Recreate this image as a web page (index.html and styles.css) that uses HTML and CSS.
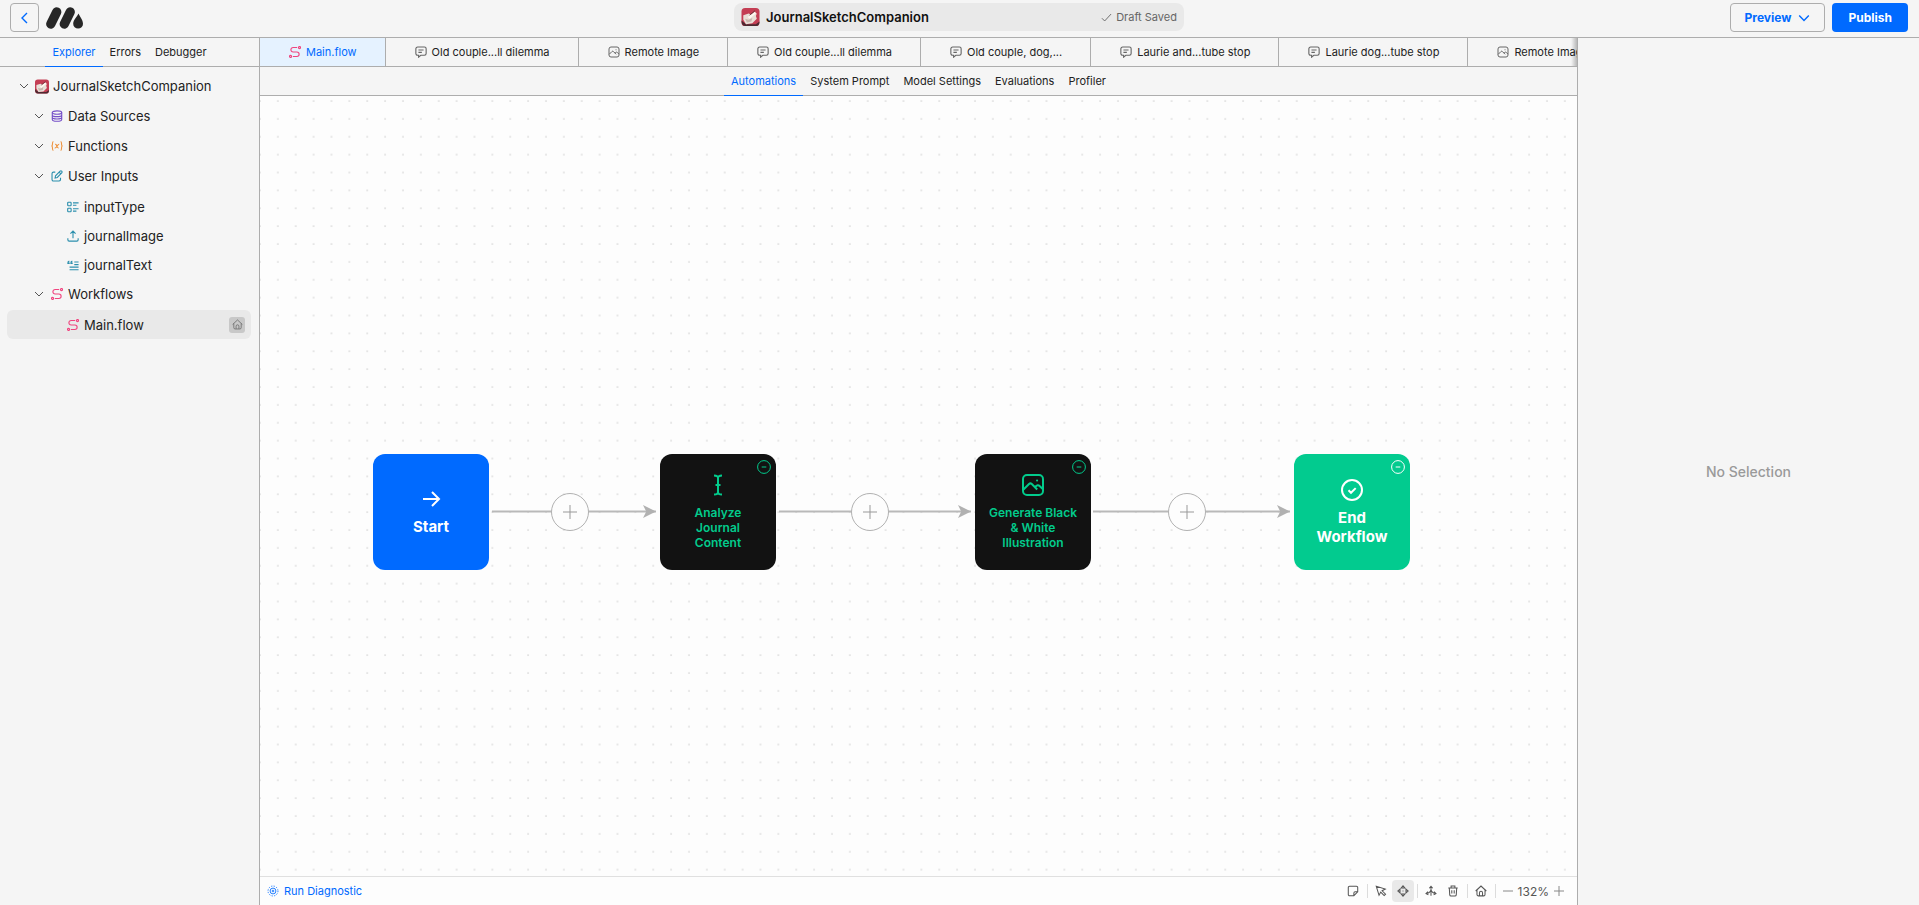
FILE: index.html
```html
<!DOCTYPE html>
<html lang="en">
<head>
<meta charset="utf-8">
<title>JournalSketchCompanion</title>
<link rel="stylesheet" href="styles.css">
</head>
<body>
<svg class="sprite" aria-hidden="true">
  <symbol id="chevron" viewBox="0 0 10 10"><path d="M1 3 5 7l4-4"/></symbol>
  <symbol id="flow" viewBox="0 0 14 14"><circle cx="1.800" cy="12.200" r="1.200"/><circle cx="12.200" cy="1.800" r="1.200"/><path d="M9.500 1.800H4.800a2.600 2.600 0 0 0 0 5.200h4.400a2.600 2.600 0 0 1 0 5.200H4.500"/></symbol>
  <symbol id="chat" viewBox="0 0 14 14"><path d="M3 1.200h8a2 2 0 0 1 2 2v5.600a2 2 0 0 1-2 2H6.800L4.200 13v-2.200H3a2 2 0 0 1-2-2V3.200a2 2 0 0 1 2-2ZM4 4.700h6M4 7.500h4"/></symbol>
  <symbol id="image" viewBox="0 0 24 24"><rect x="2" y="2" width="20" height="20" rx="4"/><path d="M2.500 16.500 8 11c1-.9 1.800-.9 2.800 0l5.400 5.500M14 14.200c2-2.400 3.400-2.400 4.600-1.200L22 16.200"/><path d="M16 7.500h.1" stroke-linecap="round"/></symbol>
  <symbol id="home" viewBox="0 0 14 14"><path d="M.8 7 7 1.200 13.200 7M2.300 5.800V11a1.700 1.700 0 0 0 1.700 1.700h6a1.700 1.700 0 0 0 1.700-1.700V5.800M5.200 12.500V9.200a1.800 1.800 0 0 1 3.600 0v3.300"/></symbol>
  <symbol id="minus-circle" viewBox="0 0 14 14"><circle cx="7" cy="7" r="6.400"/><path d="M4.700 7h4.600"/></symbol>
  <symbol id="plus" viewBox="0 0 14 14"><path d="M7 0v14M0 7h14"/></symbol>
  <symbol id="thumb" viewBox="0 0 20 20">
    <rect width="20" height="20" rx="4" fill="#c43e54"/>
    <path d="M0 14c0 3 1 6 4 6h12c3 0 4-2 4-5l-4 3H5Z" fill="#4b2a31"/>
    <path d="m2 8 6-2 4 2 3-3 2 1-1 3 1 3-5 5-7 1-3-5Z" fill="#e9e0d8"/>
    <path d="m7 10 8-6 1 2-7 6Z" fill="#fff8f0"/><path d="m4 12 4 1 4-2-1 4-5 1Z" fill="#c9b7ae"/>
    <path d="m9 8 6-5" stroke="#5c333a" stroke-width="1"/>
  </symbol>
</svg>

<div class="app">
  <header class="topbar">
    <div class="topbar-side">
      <button class="back" type="button" aria-label="Back"><svg viewBox="0 0 14 14"><path d="M9 2 4 7l5 5"/></svg></button>
      <svg class="logo" viewBox="0 0 37 22" aria-label="Logo"><path d="M4.800 17 10.700 5M18.300 17 24.200 5" stroke="#272727" stroke-width="9.400" stroke-linecap="round"/><path d="M32.500 6.500C34 9.500 37 13.300 37 16.700a4.900 4.900 0 0 1-9.800 0c0-3.400 3.800-7.200 5.300-10.200Z" fill="#272727"/></svg>
    </div>
    <div class="project">
      <svg class="project-thumb"><use href="#thumb"/></svg>
      <h1>JournalSketchCompanion</h1>
      <span class="saved"><svg viewBox="0 0 12 12"><path d="m1 6.800 3 3 7-7.600"/></svg>Draft Saved</span>
    </div>
    <div class="topbar-side topbar-actions">
      <button class="btn btn-outline" type="button">Preview <svg><use href="#chevron"/></svg></button>
      <button class="btn btn-primary" type="button">Publish</button>
    </div>
  </header>

  <div class="workspace">
    <aside class="sidebar">
      <nav class="tabs">
        <button class="tab is-active" type="button">Explorer</button>
        <button class="tab" type="button">Errors</button>
        <button class="tab" type="button">Debugger</button>
      </nav>
      <div class="tree">
        <div class="row row-root"><svg class="chev"><use href="#chevron"/></svg><svg class="root-thumb"><use href="#thumb"/></svg>JournalSketchCompanion</div>
        <div class="row row-folder"><svg class="chev"><use href="#chevron"/></svg><svg class="icon purple" viewBox="0 0 14 14"><ellipse cx="7" cy="3" rx="5.500" ry="2"/><path d="M1.500 3v8c0 1.200 2.400 2.200 5.500 2.200s5.500-1 5.500-2.200V3M1.500 5.700c0 1.200 2.400 2 5.500 2s5.500-.8 5.500-2M1.500 8.500c0 1.200 2.400 2 5.500 2s5.500-.8 5.500-2"/></svg>Data Sources</div>
        <div class="row row-folder"><svg class="chev"><use href="#chevron"/></svg><svg class="icon orange" viewBox="0 0 14 14"><path d="M2.800 1.800C1.500 2 1.800 3.300 1.700 5c0 1.300-.3 2-1.200 2 .9 0 1.200.8 1.200 2 .1 1.800-.2 3.200 1.100 3.300M11.200 1.800c1.300.2 1 1.500 1.100 3.200 0 1.300.3 2 1.200 2-.9 0-1.200.8-1.200 2-.1 1.800.2 3.200-1.100 3.300M4.700 5c2.600-.8 1.300 4.800 4.300 4.300M9.600 4.900c-2.300-.3-2.600 4.900-5.300 4.400"/></svg>Functions</div>
        <div class="row row-folder"><svg class="chev"><use href="#chevron"/></svg><svg class="icon teal" viewBox="0 0 14 14"><path d="M5 2.500H2.800A1.600 1.600 0 0 0 1.200 4v7.200a1.600 1.600 0 0 0 1.600 1.600H9.500a1.600 1.600 0 0 0 1.600-1.600V9M4.800 9.300l.5-2.600 5.300-5.300a1.300 1.300 0 0 1 1.900 1.900L7.300 8.700ZM9.500 2.500l2 2"/></svg>User Inputs</div>
        <div class="leaves">
          <div class="row row-leaf"><svg class="icon teal" viewBox="0 0 14 14"><rect x=".8" y="1.500" width="4" height="4" rx=".8"/><rect x=".8" y="8.500" width="4" height="4" rx=".8"/><path d="M7 2.200h6.500M7 5h4M7 9h6.500M7 11.800h4"/></svg>inputType</div>
          <div class="row row-leaf"><svg class="icon teal" viewBox="0 0 14 14"><path d="M7 9.500V1.500M4 4.300l3-3 3 3M1 9.500v2a1.500 1.500 0 0 0 1.500 1.500h9a1.500 1.500 0 0 0 1.500-1.500v-2"/></svg>journalImage</div>
          <div class="row row-leaf"><svg class="icon teal" viewBox="0 0 14 14"><path d="M2.700 2.500C1 3 .8 4 1 5.300h1.500V4M6.200 2.500C4.500 3 4.300 4 4.500 5.300H6V4M8.500 3.500h5M8.500 6.500h5M3 9.500h10.500M3 12.500h10.500"/></svg>journalText</div>
        </div>
        <div class="row row-folder"><svg class="chev"><use href="#chevron"/></svg><svg class="icon pink"><use href="#flow"/></svg>Workflows</div>
        <div class="leaves">
          <div class="row row-leaf is-selected"><svg class="icon pink"><use href="#flow"/></svg>Main.flow<span class="badge"><svg><use href="#home"/></svg></span></div>
        </div>
      </div>
    </aside>

    <main class="editor">
      <nav class="files">
        <button class="file is-active" type="button"><svg class="icon pink"><use href="#flow"/></svg>Main.flow</button>
        <button class="file" type="button"><svg class="icon"><use href="#chat"/></svg>Old couple...ll dilemma</button>
        <button class="file" type="button"><svg class="icon icon-image"><use href="#image"/></svg>Remote Image</button>
        <button class="file" type="button"><svg class="icon"><use href="#chat"/></svg>Old couple...ll dilemma</button>
        <button class="file" type="button"><svg class="icon"><use href="#chat"/></svg>Old couple, dog,...</button>
        <button class="file" type="button"><svg class="icon"><use href="#chat"/></svg>Laurie and...tube stop</button>
        <button class="file" type="button"><svg class="icon"><use href="#chat"/></svg>Laurie dog...tube stop</button>
        <button class="file" type="button"><svg class="icon icon-image"><use href="#image"/></svg>Remote Image</button>
      </nav>
      <nav class="tabs">
        <button class="tab is-active" type="button">Automations</button>
        <button class="tab" type="button">System Prompt</button>
        <button class="tab" type="button">Model Settings</button>
        <button class="tab" type="button">Evaluations</button>
        <button class="tab" type="button">Profiler</button>
      </nav>

      <section class="canvas">
        <svg class="canvas-bg">
          <defs>
            <pattern id="dots" width="13" height="13" patternUnits="userSpaceOnUse" patternTransform="translate(-9 -4) scale(1.375)"><rect x="5.900" y="5.900" width="1.300" height="1.300" rx=".3" fill="#e0e0e0"/></pattern>
            <marker id="arrow" viewBox="0 0 12 12" markerUnits="userSpaceOnUse" markerWidth="13" markerHeight="13" refX="12" refY="6"><path d="M0 0 12 6 0 12 3 6Z" fill="#b1b1b1"/></marker>
          </defs>
          <rect width="100%" height="100%" fill="url(#dots)"/>
          <g stroke="#b9b9b9" stroke-width="2">
            <path d="M232 415.500H396" marker-end="url(#arrow)"/>
            <path d="M519 415.500H711" marker-end="url(#arrow)"/>
            <path d="M833 415.500H1030" marker-end="url(#arrow)"/>
          </g>
        </svg>
        <article class="node node-start">
          <svg class="node-icon" viewBox="0 0 24 24"><path d="M4 12h15.500M13 5l7 7-7 7"/></svg>Start
        </article>
        <button class="add add-1" type="button" aria-label="Add step"><svg><use href="#plus"/></svg></button>
        <article class="node node-block node-analyze">
          <svg class="node-icon" viewBox="0 0 24 24"><path d="M8 2.500c2 0 4 .7 4 2.500v14c0 1.800-2 2.500-4 2.500M16 2.500c-2 0-4 .7-4 2.500v14c0 1.800 2 2.500 4 2.500M9.500 12h5"/></svg>Analyze Journal Content
          <button class="collapse" type="button" aria-label="Collapse"><svg><use href="#minus-circle"/></svg></button>
        </article>
        <button class="add add-2" type="button" aria-label="Add step"><svg><use href="#plus"/></svg></button>
        <article class="node node-block node-generate">
          <svg class="node-icon"><use href="#image"/></svg>Generate Black &amp; White Illustration
          <button class="collapse" type="button" aria-label="Collapse"><svg><use href="#minus-circle"/></svg></button>
        </article>
        <button class="add add-3" type="button" aria-label="Add step"><svg><use href="#plus"/></svg></button>
        <article class="node node-end">
          <svg class="node-icon" viewBox="0 0 24 24"><circle cx="12" cy="12" r="10"/><path d="m8.500 12.300 2.500 2.500 4.700-4.700"/></svg>End Workflow
          <button class="collapse" type="button" aria-label="Collapse"><svg><use href="#minus-circle"/></svg></button>
        </article>
      </section>

      <footer class="statusbar">
        <button class="diagnostic" type="button"><svg viewBox="0 0 14 14"><circle cx="7" cy="7" r="3.400"/><circle cx="7" cy="7" r="1"/><circle cx="7" cy="7" r="5.800" stroke-dasharray="1.500 1.540"/></svg>Run Diagnostic</button>
        <div class="tools">
          <button class="tool" type="button" aria-label="Note"><svg viewBox="0 0 14 14"><path d="M3 1.500h8A1.500 1.500 0 0 1 12.500 3v5L8 12.500H3A1.500 1.500 0 0 1 1.500 11V3A1.500 1.500 0 0 1 3 1.500ZM12.500 8H9.500A1.500 1.500 0 0 0 8 9.500v3"/></svg></button>
          <i class="sep"></i>
          <button class="tool" type="button" aria-label="Select"><svg viewBox="0 0 14 14"><path d="m1.500 1.500 3.200 10.500 2-3.700 4 4 1.600-1.600-4-4 3.700-2Z"/></svg></button>
          <button class="tool is-active" type="button" aria-label="Pan"><svg viewBox="0 0 14 14"><path d="m4.800 3.500 2.200-2.500 2.200 2.500ZM4.800 10.500 7 13l2.200-2.500ZM3.500 4.800 1 7l2.500 2.200ZM10.500 4.800 13 7l-2.500 2.200ZM6.500 7h1"/></svg></button>
          <i class="sep"></i>
          <button class="tool" type="button" aria-label="Arrange"><svg viewBox="0 0 14 14"><path d="M7 12.500V2M5 3.800 7 1.500l2 2.300M7 5.500C6.500 8 4.500 9.500 2 10M3.500 7.800 1.200 10l2.800 1.500M7 5.500C7.500 8 9.500 9.500 12 10M10.500 7.800l2.300 2.200-2.800 1.500"/></svg></button>
          <button class="tool" type="button" aria-label="Delete"><svg viewBox="0 0 14 14"><path d="M1.500 3.500h11M4.800 3.300V1.200h4.400v2.100M2.700 3.700l.5 7.800a1.500 1.500 0 0 0 1.500 1.300h4.600a1.500 1.500 0 0 0 1.500-1.300l.5-7.800M5.600 6v4M8.400 6v4"/></svg></button>
          <i class="sep"></i>
          <button class="tool" type="button" aria-label="Home"><svg><use href="#home"/></svg></button>
          <i class="sep"></i>
          <button class="zoom-btn" type="button" aria-label="Zoom out"><svg viewBox="0 0 10 10"><path d="M0 5h10"/></svg></button>
          <span class="zoom-value">132%</span>
          <button class="zoom-btn" type="button" aria-label="Zoom in"><svg viewBox="0 0 10 10"><path d="M0 5h10M5 0v10"/></svg></button>
        </div>
      </footer>
    </main>

    <aside class="inspector">No Selection</aside>
  </div>
</div>
</body>
</html>
```
FILE: styles.css
```css
* { box-sizing: border-box; }

body {
  margin: 0;
  font-family: Inter, "Liberation Sans", sans-serif;
  font-size: 11px;
  color: #222;
  background: #f5f5f5;
}

button {
  margin: 0;
  padding: 0;
  border: 0;
  background: none;
  color: inherit;
  font: inherit;
  cursor: pointer;
}

svg {
  display: block;
  flex: none;
  fill: none;
  stroke: currentColor;
  overflow: visible;
}

.sprite { position: absolute; width: 0; height: 0; }
#thumb { stroke: none; }

.app {
  display: flex;
  flex-direction: column;
  height: 100vh;
}

/* Top bar */
.topbar {
  display: flex;
  align-items: flex-start;
  height: 38px;
  padding: 3px 11px 0 10px;
  border-bottom: 1px solid #adadad;
}
.topbar-side { display: flex; flex: 1; align-items: center; gap: 7px; }
.topbar-actions { justify-content: flex-end; }
.back {
  display: flex;
  align-items: center;
  justify-content: center;
  width: 29px;
  height: 29px;
  border: 1px solid #adadad;
  border-radius: 4px;
  color: #006aff;
}
.back svg { width: 14px; height: 14px; stroke-width: 1.4; }
.logo { width: 37px; height: 22px; stroke: none; }
.project {
  display: flex;
  align-items: center;
  width: 450px;
  height: 28px;
  padding: 0 7px;
  border-radius: 8px;
  background: #e9e9e9;
}
.project-thumb { width: 19px; height: 18px; }
.project h1 { flex: 1; margin: 0 0 0 6px; font-size: 13px; font-weight: 600; color: #111; }
.saved { display: flex; align-items: center; gap: 4px; color: #666; }
.saved svg { width: 11px; height: 11px; }
.btn {
  display: flex;
  align-items: center;
  justify-content: center;
  gap: 7px;
  height: 29px;
  border-radius: 4px;
  font-size: 12px;
  font-weight: 700;
}
.btn svg { width: 12px; height: 12px; stroke-width: 1.2; }
.btn-outline { padding: 0 14px; border: 1px solid #adadad; color: #006aff; }
.btn-primary { padding: 0 16px; background: #006aff; color: #fff; }

/* Layout */
.workspace { display: flex; flex: 1; min-height: 0; }
.sidebar { width: 260px; border-right: 1px solid #adadad; }
.editor { display: flex; flex: 1; flex-direction: column; min-width: 0; }
.inspector {
  display: flex;
  align-items: center;
  justify-content: center;
  width: 342px;
  border-left: 1px solid #adadad;
  font-size: 14px;
  font-weight: 500;
  color: #9a9a9a;
}

/* Text tabs */
.tabs {
  display: flex;
  flex: none;
  justify-content: center;
  height: 29px;
  border-bottom: 1px solid #adadad;
}
.tab { height: 29px; padding: 0 7px; border-bottom: 1px solid transparent; }
.tab.is-active { border-color: #006aff; color: #006aff; }

/* Project tree */
.tree { padding: 4px 8px 0 7px; font-size: 13px; }
.row { display: flex; align-items: center; height: 30px; }
.row-root { padding-left: 12px; }
.row-folder { padding-left: 27px; }
.row-leaf { height: 29px; padding: 0 6px 0 60px; border-radius: 6px; }
.row-leaf.is-selected { background: #e9e9e9; }
.leaves { padding-top: 1px; }
.chev { width: 10px; height: 10px; margin-right: 6px; color: #555; }
.row-folder .chev { margin-right: 7px; }
.icon { width: 12px; height: 12px; margin-right: 5px; stroke-width: 1.3; }
.root-thumb { width: 14px; height: 15px; margin-right: 4px; }
.purple { color: #7650c8; }
.orange { color: #ee9440; }
.teal { color: #2b8fad; }
.pink { color: #f0447f; }
.badge {
  display: flex;
  align-items: center;
  justify-content: center;
  width: 16px;
  height: 16px;
  margin-left: auto;
  border-radius: 3px;
  background: #c8c8c8;
  color: #666;
}
.badge svg { width: 11px; height: 11px; }

/* Open files */
.files {
  position: relative;
  display: flex;
  flex: none;
  height: 29px;
  border-bottom: 1px solid #adadad;
  overflow: hidden;
}
.files::after {
  content: "";
  position: absolute;
  top: 0;
  right: 0;
  width: 6px;
  height: 100%;
  background: linear-gradient(to right, transparent, rgba(0, 0, 0, 0.25));
}
.file {
  display: flex;
  flex: none;
  align-items: center;
  padding: 0 28px 0 29px;
  border-right: 1px solid #adadad;
}
.file .icon:not(.pink) { color: #666; }
.file.is-active { background: #e5f2ff; color: #006aff; }
.icon-image { stroke-width: 2; }

/* Canvas */
.canvas { position: relative; flex: 1; min-height: 0; overflow: hidden; background: #fdfdfd; }
.canvas-bg { position: absolute; inset: 0; width: 100%; height: 100%; stroke: none; }
.node {
  position: absolute;
  top: 358px;
  display: flex;
  flex-direction: column;
  align-items: center;
  justify-content: center;
  gap: 6px;
  width: 116px;
  height: 116px;
  padding: 0 12px 1px;
  border-radius: 12px;
  font-size: 15px;
  line-height: 19px;
  font-weight: 700;
  text-align: center;
  color: #fff;
}
.node-icon { width: 24px; height: 24px; stroke-width: 2; }
.node-start { left: 113px; background: #006aff; }
.node-block { gap: 8px; background: #121212; color: #02cb8c; font-size: 12px; line-height: 15px; font-weight: 600; }
.node-analyze { left: 400px; padding: 0 30px 1px; }
.node-generate { left: 715px; }
.node-end { left: 1034px; background: #02cb8f; }
.collapse { position: absolute; top: 6px; right: 5px; }
.collapse svg { width: 14px; height: 14px; }
.add {
  position: absolute;
  top: 397px;
  display: flex;
  align-items: center;
  justify-content: center;
  width: 38px;
  height: 38px;
  border: 1px solid #b1b1b1;
  border-radius: 50%;
  background: #fdfdfd;
  color: #999;
}
.add svg { width: 14px; height: 14px; }
.add-1 { left: 291px; }
.add-2 { left: 591px; }
.add-3 { left: 908px; }

/* Status bar */
.statusbar {
  display: flex;
  flex: none;
  align-items: center;
  justify-content: space-between;
  height: 29px;
  padding: 0 13px 0 7px;
  border-top: 1px solid #e0e0e0;
  background: #fdfdfd;
}
.diagnostic { display: flex; align-items: center; gap: 5px; color: #006aff; }
.diagnostic svg { width: 12px; height: 12px; }
.tools { display: flex; align-items: center; color: #555; }
.tool {
  display: flex;
  align-items: center;
  justify-content: center;
  width: 22px;
  height: 22px;
  border-radius: 4px;
}
.tool svg { width: 12px; height: 12px; stroke-width: 1.2; }
.tool.is-active { background: #e9e9e9; }
.sep { width: 1px; height: 14px; margin: 0 2px 0 3px; background: #dcdcdc; }
.zoom-btn { margin-left: 5px; color: #888; }
.zoom-btn svg { width: 10px; height: 10px; }
.zoom-value { margin-left: 5px; font-size: 12px; }
```
